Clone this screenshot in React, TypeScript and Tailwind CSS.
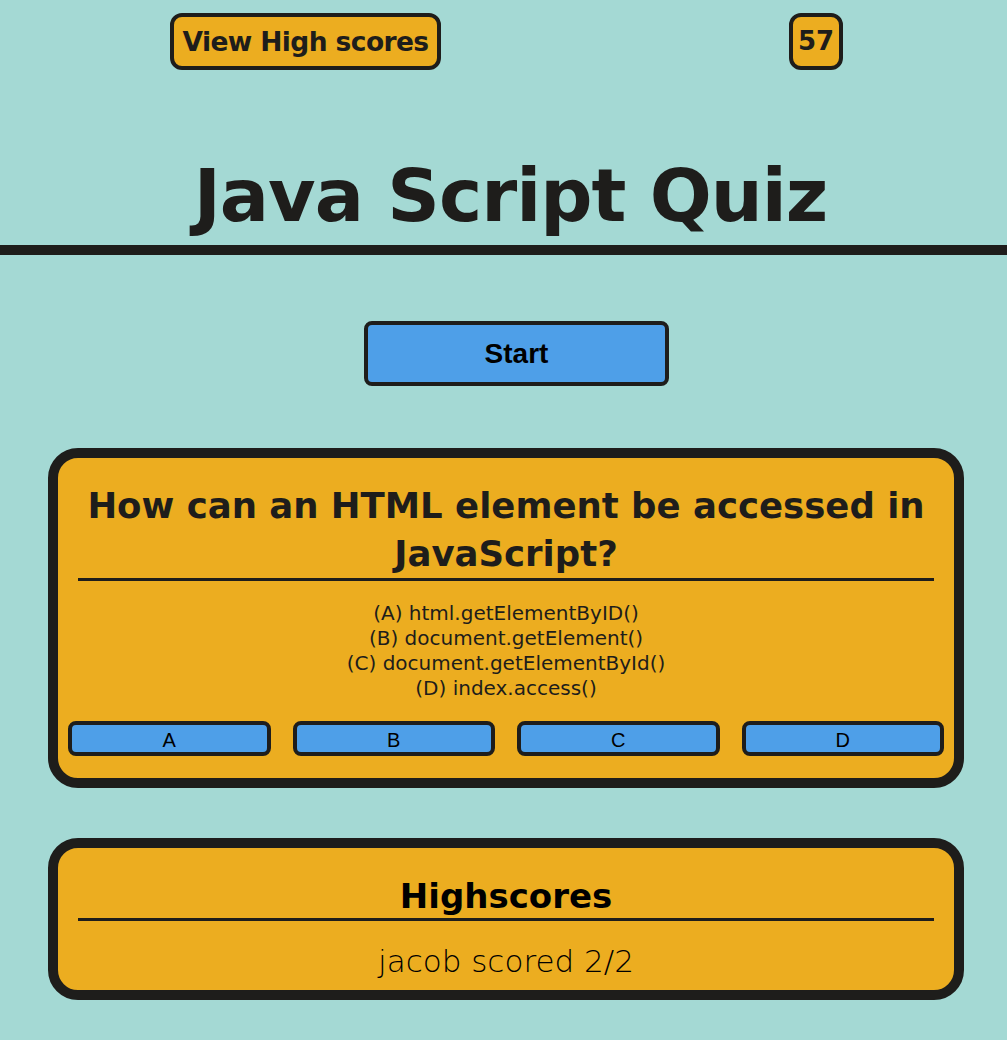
import React from 'react';

const options = [
  '(A) html.getElementByID()',
  '(B) document.getElement()',
  '(C) document.getElementById()',
  '(D) index.access()',
];

export default function App() {
  return (
    <div className="min-h-[1040px] bg-[#a4d9d4] text-[#1e1d1b] font-['DejaVu_Sans',sans-serif]">
      <header className="flex items-start pt-[13px] pl-[170px]">
        <button className="w-[271px] h-[57px] rounded-[12px] border-[4px] border-[#1e1d1b] bg-[#ecad20] text-[26.5px] font-bold tracking-[-0.6px] flex items-center justify-center">
          View High scores
        </button>
        <div className="ml-[348px] w-[54px] h-[57px] rounded-[12px] border-[4px] border-[#1e1d1b] bg-[#ecad20] text-[26px] font-bold flex items-center justify-center">
          57
        </div>
      </header>

      <h1 className="mt-[86px] pl-[14px] text-center text-[73px] leading-[80px] font-bold tracking-[-1px]">Java Script Quiz</h1>
      <div className="mt-[9px] h-[10px] bg-[#1e1d1b]" />

      <div className="flex mt-[66px] pl-[364px]">
        <button className="w-[305px] h-[65px] rounded-[8px] border-[4px] border-[#1e1d1b] bg-[#4e9fe8] text-[28px] font-bold text-black font-['Liberation_Sans',sans-serif]">
          Start
        </button>
      </div>

      <section className="ml-[48px] mr-[43px] mt-[62px] h-[340px] rounded-[30px] border-[10px] border-[#1e1d1b] bg-[#ecad20] px-[10px]">
        <h2 className="mt-[24px] text-center text-[35.5px] leading-[48px] font-bold px-[10px]">
          How can an HTML element be accessed in JavaScript?
        </h2>
        <div className="mx-[10px] h-[3px] bg-[#1e1d1b]" />
        <div className="mt-[20px] text-center text-[20px] leading-[25px]">
          {options.map(o => (
            <p key={o}>{o}</p>
          ))}
        </div>
        <div className="mt-[20px] grid grid-cols-4 gap-[22px]">
          {['A', 'B', 'C', 'D'].map(l => (
            <button
              key={l}
              className="h-[35px] rounded-[8px] border-[4px] border-[#1e1d1b] bg-[#4e9fe8] text-[20px] text-black font-['Liberation_Sans',sans-serif]"
            >
              {l}
            </button>
          ))}
        </div>
      </section>

      <section className="ml-[48px] mr-[43px] mt-[50px] h-[162px] rounded-[30px] border-[10px] border-[#1e1d1b] bg-[#ecad20] px-[20px]">
        <h2 className="mt-[28px] text-center text-[34px] leading-[40px] font-bold text-black">Highscores</h2>
        <div className="mt-[2px] h-[3px] bg-[#1e1d1b]" />
        <p className="mt-[23px] text-center text-[31px] leading-[34px] font-light text-black">jacob scored 2/2</p>
      </section>
    </div>
  );
}
